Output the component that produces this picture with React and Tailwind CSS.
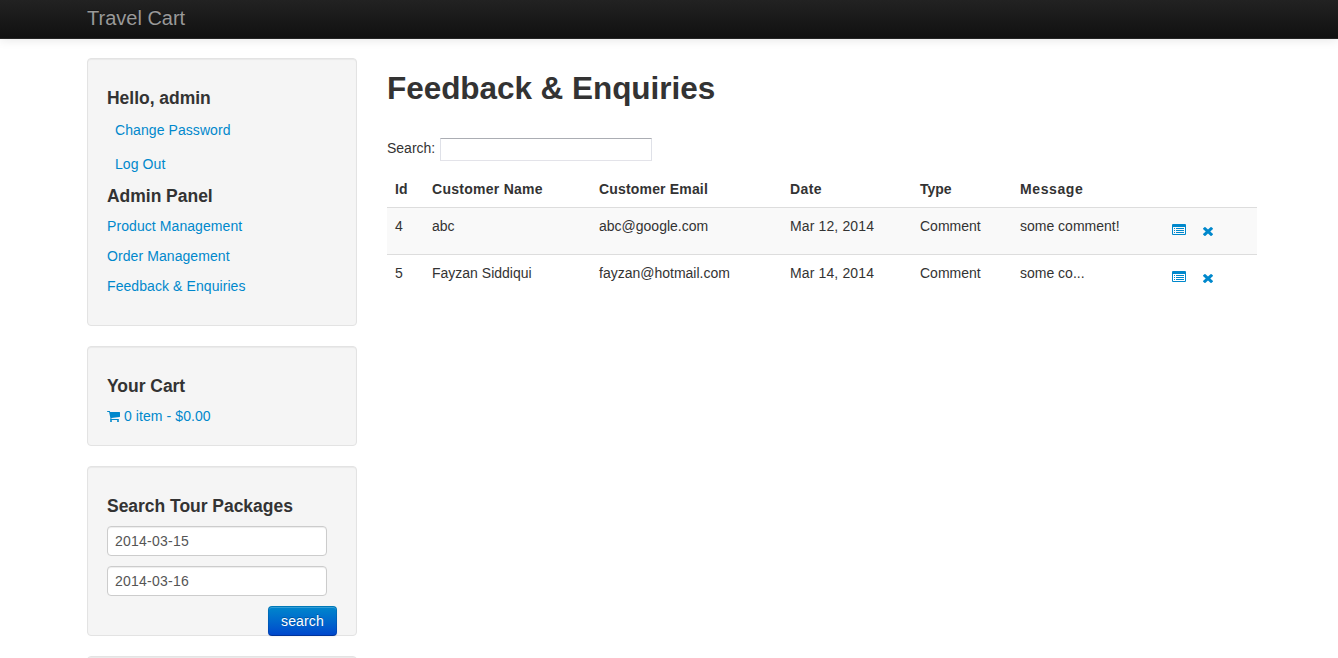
const WELL =
  'w-[270px] shrink-0 rounded border border-[#e3e3e3] bg-[#f5f5f5] p-[19px] shadow-[inset_0_1px_1px_rgba(0,0,0,0.05)]';
const HEADING = 'my-[10px] text-[17.5px] font-bold leading-5 tracking-[-0.03px] text-[#333333]';
const LINK = 'tracking-[0.08px] text-[#0088cc]';
const CELL = 'p-2 text-left align-top';

function CartIcon() {
  return (
    <svg viewBox="64 128 1664 1536" className="mr-1 h-[12px] w-[13px]" preserveAspectRatio="none" fill="currentColor">
      <path d="M704 1536q0 52-38 90t-90 38-90-38-38-90 38-90 90-38 90 38 38 90zm896 0q0 52-38 90t-90 38-90-38-38-90 38-90 90-38 90 38 38 90zm128-1088v512q0 24-16.5 42.5t-40.5 21.5l-1044 122q13 60 13 70 0 16-24 64h920q26 0 45 19t19 45-19 45-45 19h-1024q-26 0-45-19t-19-45q0-11 8-31.5t16-36 21.5-40 15.5-29.5l-177-823h-204q-26 0-45-19t-19-45 19-45 45-19h256q16 0 28.5 6.5t19.5 15.5 13 24.5 8 26 5.5 29.5 4.5 26h1201q26 0 45 19t19 45z" />
    </svg>
  );
}

function ListIcon() {
  return (
    <svg viewBox="0 0 14 11" className="ml-px mt-2 h-[11px] w-[14px]" fill="currentColor">
      <path
        fillRule="evenodd"
        d="M1 0h12q1 0 1 1v9q0 1-1 1H1q-1 0-1-1V1q0-1 1-1zM1 3v6.7q0 .3.3.3h11.4q.3 0 .3-.3V3z"
      />
      <path d="M2 4h1v1H2zM4 4h8v1H4zM2 6h1v1H2zM4 6h8v1H4zM2 8h1v1H2zM4 8h8v1H4z" />
    </svg>
  );
}

function RemoveIcon() {
  return (
    <svg viewBox="302 366 1188 1188" className="mt-[11px] h-[9px] w-[10px]" preserveAspectRatio="none" fill="currentColor">
      <path d="M1490 1322q0 40-28 68l-136 136q-28 28-68 28t-68-28l-294-294-294 294q-28 28-68 28t-68-28l-136-136q-28-28-28-68t28-68l294-294-294-294q-28-28-28-68t28-68l136-136q28-28 68-28t68 28l294 294 294-294q28-28 68-28t68 28l136 136q28 28 28 68t-28 68l-294 294 294 294q28 28 28 68z" />
    </svg>
  );
}

const rows = [
  { id: 4, name: 'abc', email: 'abc@google.com', date: 'Mar 12, 2014', type: 'Comment', message: 'some comment!' },
  { id: 5, name: 'Fayzan Siddiqui', email: 'fayzan@hotmail.com', date: 'Mar 14, 2014', type: 'Comment', message: 'some co...' },
];

function DateInput({ value }) {
  return (
    <input
      defaultValue={value}
      className="mb-[10px] block h-[30px] w-[220px] rounded border border-[#cccccc] bg-white px-[7px] text-sm tracking-[0.24px] text-[#555555] shadow-[inset_0_1px_1px_rgba(0,0,0,0.075)]"
    />
  );
}

function Sidebar() {
  return (
    <aside className="flex w-[270px] shrink-0 flex-col gap-5">
      <section className={`${WELL} h-[268px]`}>
        <h4 className={HEADING}>Hello, admin</h4>
        <nav className="flex flex-col">
          <a className={`${LINK} mb-[14px] ml-2 mt-[2px]`}>Change Password</a>
          <a className={`${LINK} ml-2`}>Log Out</a>
        </nav>
        <h4 className="mb-[10px] mt-3 text-[17.5px] font-bold leading-5 tracking-[-0.03px] text-[#333333]">
          Admin Panel
        </h4>
        <nav className="flex flex-col gap-[10px]">
          <a className={LINK}>Product Management</a>
          <a className={LINK}>Order Management</a>
          <a className={LINK}>Feedback &amp; Enquiries</a>
        </nav>
      </section>
      <section className={`${WELL} h-[100px]`}>
        <h4 className={HEADING}>Your Cart</h4>
        <a className={`${LINK} flex items-center`}>
          <CartIcon />0 item - $0.00
        </a>
      </section>
      <section className={`${WELL} h-[170px]`}>
        <h4 className={HEADING}>Search Tour Packages</h4>
        <DateInput value="2014-03-15" />
        <DateInput value="2014-03-16" />
        <div className="flex justify-end">
          <button className="h-[30px] w-[69px] rounded border border-[rgba(0,0,0,0.1)] border-b-[rgba(0,0,0,0.25)] bg-linear-to-b from-[#0088cc] to-[#0044cc] bg-origin-border text-sm leading-5 tracking-[0.15px] text-white shadow-[inset_0_1px_0_rgba(255,255,255,0.2),0_1px_2px_rgba(0,0,0,0.05)] [text-shadow:0_-1px_0_rgba(0,0,0,0.25)]">
            search
          </button>
        </div>
      </section>
      <section className={`${WELL} h-[100px]`} />
    </aside>
  );
}

function FeedbackTable() {
  return (
    <table className="w-[870px] table-fixed border-collapse">
      <colgroup>
        <col className="w-[37px]" />
        <col className="w-[167px]" />
        <col className="w-[191px]" />
        <col className="w-[130px]" />
        <col className="w-[100px]" />
        <col className="w-[151px]" />
        <col />
      </colgroup>
      <thead>
        <tr className="h-9 font-bold">
          <th className={CELL}>Id</th>
          <th className={`${CELL} tracking-[0.27px]`}>Customer Name</th>
          <th className={`${CELL} tracking-[0.17px]`}>Customer Email</th>
          <th className={`${CELL} tracking-[0.4px]`}>Date</th>
          <th className={CELL}>Type</th>
          <th className={`${CELL} tracking-[0.6px]`}>Message</th>
          <th className={CELL} />
        </tr>
      </thead>
      <tbody>
        {rows.map((r) => (
          <tr key={r.id} className="h-[47px] border-t border-[#dddddd] odd:bg-[#f9f9f9]">
            <td className={CELL}>{r.id}</td>
            <td className={CELL}>{r.name}</td>
            <td className={CELL}>{r.email}</td>
            <td className={`${CELL} tracking-[0.13px]`}>{r.date}</td>
            <td className={CELL}>{r.type}</td>
            <td className={CELL}>{r.message}</td>
            <td className={CELL}>
              <div className="flex items-start gap-[17px] text-[#0088cc]">
                <ListIcon />
                <RemoveIcon />
              </div>
            </td>
          </tr>
        ))}
      </tbody>
    </table>
  );
}

export default function App() {
  return (
    <div className="h-[658px] overflow-hidden bg-white font-['Liberation_Sans',Arial,sans-serif] text-sm leading-5 text-[#333333]">
      <header className="h-[39px] border-b border-[#252525] bg-linear-to-b from-[#222222] to-[#111111] pl-[87px] shadow-[0_1px_10px_rgba(0,0,0,0.1)]">
        <span className="block pt-[8px] text-xl leading-5 text-[#999999] [text-shadow:0_-1px_0_rgba(0,0,0,0.25)]">
          Travel Cart
        </span>
      </header>
      <div className="flex gap-[30px] pl-[87px] pt-[19px]">
        <Sidebar />
        <main className="w-[870px]">
          <h1 className="mt-[10px] text-[31.5px] font-bold leading-10 tracking-[-0.05px]">Feedback &amp; Enquiries</h1>
          <label className="mb-[10px] mt-[30px] flex h-[23px] items-start">
            <span className="w-[53px]">Search:</span>
            <input className="h-[23px] w-[212px] border border-[#e3e3e9] border-t-[#abadb3] border-x-[#dfe1e8] bg-white" />
          </label>
          <FeedbackTable />
        </main>
      </div>
    </div>
  );
}
